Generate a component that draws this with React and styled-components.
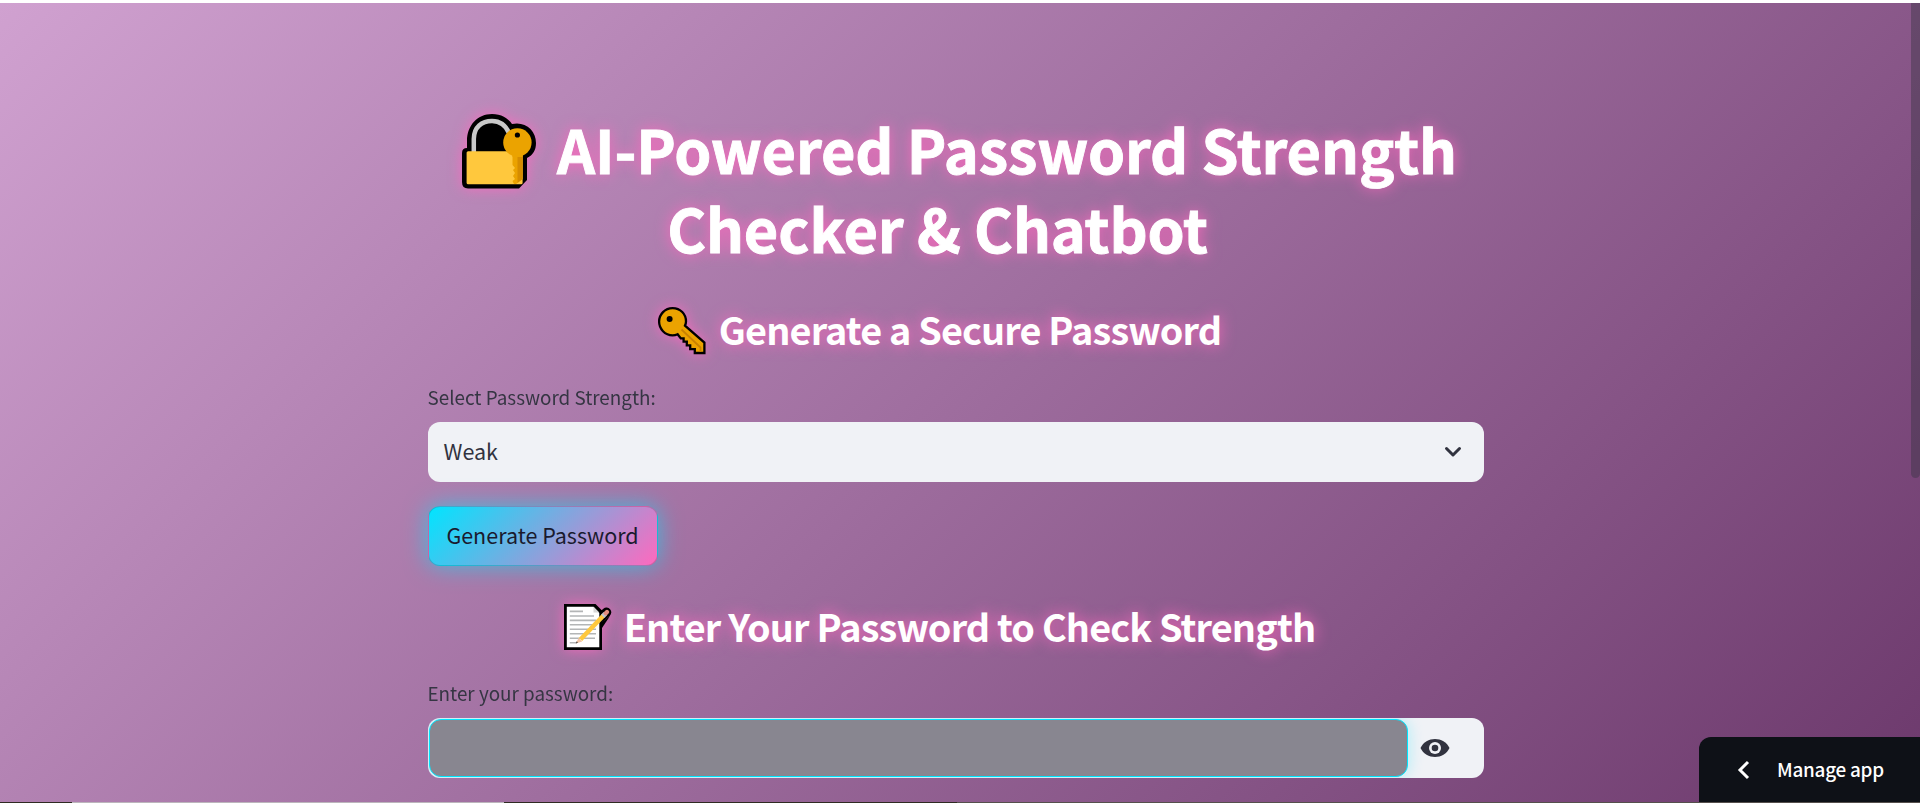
import React from 'react';
import styled, { createGlobalStyle, css } from 'styled-components';

const GlobalStyle = createGlobalStyle`
  * { box-sizing: border-box; }
  body {
    margin: 0;
    overflow: hidden;
    font-family: "Noto Sans CJK SC", "Noto Sans", sans-serif;
    color: #31333f;
  }
`;

const glow = css`
  filter: drop-shadow(0 0 7px rgba(255, 105, 190, 0.85));
`;

const Page = styled.div`
  height: 803px;
  display: flex;
  flex-direction: column;
  border-top: 3px solid #fff;
`;

const Scene = styled.main`
  position: relative;
  flex: 1;
  overflow: hidden;
  background: linear-gradient(135deg, #d0a1d0, #6c396c);
`;

const Column = styled.div`
  width: 1056px;
  margin-left: 428px;
  padding-top: 108px;
`;

const Title = styled.h1`
  margin: 0;
  height: 158px;
  color: #fff;
  font-size: 59.4px;
  font-weight: 700;
  line-height: 79px;
  letter-spacing: -0.13px;
  -webkit-text-stroke: 0.9px #fff;
  text-shadow: 0 0 15px #ff69be;
`;

const TitleLine = styled.span`
  display: flex;
  align-items: center;
  justify-content: center;
  gap: 21px;
  height: 79px;
  padding: 0 ${(p) => p.$right || 0}px 0 ${(p) => p.$left || 0}px;
  white-space: nowrap;
`;

const HeadingText = styled.span`
  margin-top: -${(p) => p.$lift}px;
`;

const Heading = styled.h3`
  margin: ${(p) => p.$top}px 0 0;
  height: 50px;
  padding-right: 33px;
  display: flex;
  align-items: center;
  justify-content: center;
  gap: 13px;
  color: #fff;
  font-size: 37.8px;
  font-weight: 700;
  line-height: 50px;
  letter-spacing: -0.86px;
  white-space: nowrap;
  text-shadow: 0 0 15px #ff69be;
`;

const Emoji = styled.svg`
  flex: none;
  overflow: visible;
  margin-top: ${(p) => p.$drop || 0}px;
  ${glow}
`;

const Label = styled.label`
  display: block;
  margin-top: ${(p) => p.$top}px;
  height: 32px;
  font-size: 18.85px;
  line-height: 30px;
  text-indent: -0.5px;
  opacity: 0.96;
`;

const Field = styled.div`
  margin-top: 8px;
  height: 60px;
  display: flex;
  align-items: center;
  border-radius: 12px;
  background: #f0f2f6;
  overflow: hidden;
  font-size: 21.5px;
`;

const Value = styled.span`
  flex: 1;
  padding: 0 0 3px 15.5px;
`;

const Chevron = styled.svg`
  margin-right: 22px;
`;

const PasswordInput = styled.input`
  flex: none;
  width: 979px;
  height: 58px;
  margin-left: 1px;
  border: 1px solid #00e5ff;
  border-radius: 12px;
  background: #888690;
  box-shadow: 0 0 15px rgba(0, 229, 255, 0.3);
  outline: none;
`;

const Eye = styled.svg`
  margin-left: 10px;
`;

const Button = styled.button`
  display: block;
  margin-top: 24px;
  width: 230px;
  height: 60px;
  padding: 0 1px 3px 0;
  border: 1px solid rgba(49, 51, 63, 0.2);
  border-radius: 12px;
  background: linear-gradient(135deg, #00e5ff, #ff69be);
  box-shadow: 0 0 23px rgba(0, 229, 255, 0.6);
  color: #1a1a2e;
  font: inherit;
  font-size: 21.5px;
`;

const Scrollbar = styled.div`
  position: absolute;
  top: 0;
  right: 0;
  width: 9px;
  height: 475px;
  border-radius: 0 0 5px 5px;
  background: rgba(49, 51, 63, 0.4);
`;

const ManageApp = styled.button`
  position: absolute;
  right: 0;
  bottom: 0;
  width: 221px;
  height: 65px;
  padding: 0 0 0 36px;
  display: flex;
  align-items: center;
  gap: 24px;
  border: 0;
  border-radius: 12px 0 0 0;
  background: #0e1117;
  color: #fff;
  font: inherit;
  font-size: 18.9px;
  font-weight: 500;
  letter-spacing: -0.25px;
`;

const ManageText = styled.span`
  padding-bottom: 2px;
`;

const BottomEdge = styled.div`
  height: 1px;
  background: linear-gradient(90deg, #2f2b22 0 72px, #bcb6bc 72px 504px, #2f2b22 504px 957px, #55504c 957px);
`;

function LockWithKey() {
  return (
    <Emoji $drop={1} width="74" height="75" viewBox="0 0 74 75">
      <path d="M5 34V27C5 11 16 0 30 0C39 0 46 4 50 10C63 7 74 16 74 29C74 36 71 41 65 44V66L57 74.5H6Q0 74.5 0 68V39Q0 34 5 34Z" fill="#000" />
      <path d="M11.8 38V25C11.8 13 20 7 30 7C38 7 44 12 47 19" fill="none" stroke="#c9c9c9" strokeWidth="4.5" />
      <rect x="4.6" y="37.3" width="56" height="33" rx="1.5" fill="#ffc83d" />
      <path d="M50.5 41H60.5V65L54 70H52L50.5 67L53 65L51 62L53 59L51 56L53 54L50.5 51Z" fill="#eba300" />
      <path d="M55.5 42V69L60.5 65V42Z" fill="#d58c00" />
      <circle cx="55.4" cy="28.5" r="14.2" fill="#eba300" />
      <path d="M50.5 38H60.5V43H50.5Z" fill="#eba300" />
      <circle cx="55.4" cy="21" r="2.6" fill="#000" />
    </Emoji>
  );
}

function Key() {
  return (
    <Emoji $drop={1} width="48" height="48" viewBox="0 0 48 48">
      <path d="M14.6 1.1C22.5 1.1 28 7.2 28 14.4C28 16 27.6 17.3 27 18.6L46.4 35.6V46H36.8V42.2H32.2V38.4H28.8V34.6H25.6V31.4H22.8L19.6 27.2C17.8 28 16.4 28.3 14.6 28.3C7 28.3 1.1 22 1.1 14.6C1.1 7.2 7 1.1 14.6 1.1Z" fill="#eba300" stroke="#000" strokeWidth="2.3" />
      <path d="M23.5 22.5L42.5 40.5V45" fill="none" stroke="#c98200" strokeWidth="1.8" />
      <circle cx="11.6" cy="12" r="3" fill="#000" />
    </Emoji>
  );
}

function Memo() {
  return (
    <Emoji width="47" height="46" viewBox="0 0 47 46">
      <path d="M36 14L42.5 8.3" stroke="#000" strokeWidth="9.6" strokeLinecap="round" />
      <path d="M38 18V24L46 12Z" fill="#000" />
      <path d="M0 0H31.5L38 6.5V46H0Z" fill="#000" />
      <path d="M2.8 2.8H29.5L35.3 9V43.2H2.8Z" fill="#fff" />
      <path d="M29.5 2.8V8.6H35.3Z" fill="#d8d8d8" />
      <path d="M5.8 7.4H19M5.8 12H30M5.8 16.4H32M5.8 20.8H32M5.8 25.3H32M5.8 29.8H32M5.8 34.3H31M5.8 38.7H13" stroke="#b3b5b6" strokeWidth="1.6" />
      <path d="M16.5 35.5L39.5 11.5" stroke="#ffc83d" strokeWidth="4.6" />
      <path d="M14.6 34L18.2 37.4L11.8 39.5Z" fill="#f3c4a4" />
      <path d="M11.8 39.5L12.7 37.3L14 38.6Z" fill="#444" />
      <path d="M38.8 12.2L41.4 9.6" stroke="#c4c7c9" strokeWidth="4.8" />
      <path d="M41.8 9.2L43 8" stroke="#e58f80" strokeWidth="4.4" strokeLinecap="round" />
    </Emoji>
  );
}

export default function App() {
  return (
    <Page>
      <GlobalStyle />
      <Scene>
        <Column>
          <Title>
            <TitleLine $left={7}><LockWithKey /><HeadingText $lift={4}>AI-Powered Password Strength</HeadingText></TitleLine>
            <TitleLine $right={37}><HeadingText $lift={4}>Checker &amp; Chatbot</HeadingText></TitleLine>
          </Title>
          <Heading $top={36}><Key /><HeadingText $lift={3}>Generate a Secure Password</HeadingText></Heading>
          <Label $top={27}>Select Password Strength:</Label>
          <Field>
            <Value>Weak</Value>
            <Chevron width="18" height="12" viewBox="0 0 18 12" fill="none" stroke="#31333f" strokeWidth="3" strokeLinecap="round" strokeLinejoin="round">
              <path d="M2.5 2.5L9 9L15.5 2.5" />
            </Chevron>
          </Field>
          <Button type="button">Generate Password</Button>
          <Heading $top={36}><Memo /><HeadingText $lift={3}>Enter Your Password to Check Strength</HeadingText></Heading>
          <Label $top={26}>Enter your password:</Label>
          <Field>
            <PasswordInput type="password" aria-label="Enter your password" />
            <Eye width="34" height="24" viewBox="0 0 34 24">
              <path d="M2.5 12C8 0 26 0 31.5 12C26 24 8 24 2.5 12Z" fill="#31333f" />
              <circle cx="17" cy="12" r="6" fill="#f0f2f6" />
              <circle cx="17" cy="12" r="3.3" fill="#31333f" />
            </Eye>
          </Field>
        </Column>
        <Scrollbar />
        <ManageApp type="button">
          <svg width="18" height="20" viewBox="0 0 18 20" fill="none" stroke="#fff" strokeWidth="3">
            <path d="M13 2L5 10L13 18" />
          </svg>
          <ManageText>Manage app</ManageText>
        </ManageApp>
      </Scene>
      <BottomEdge />
    </Page>
  );
}
